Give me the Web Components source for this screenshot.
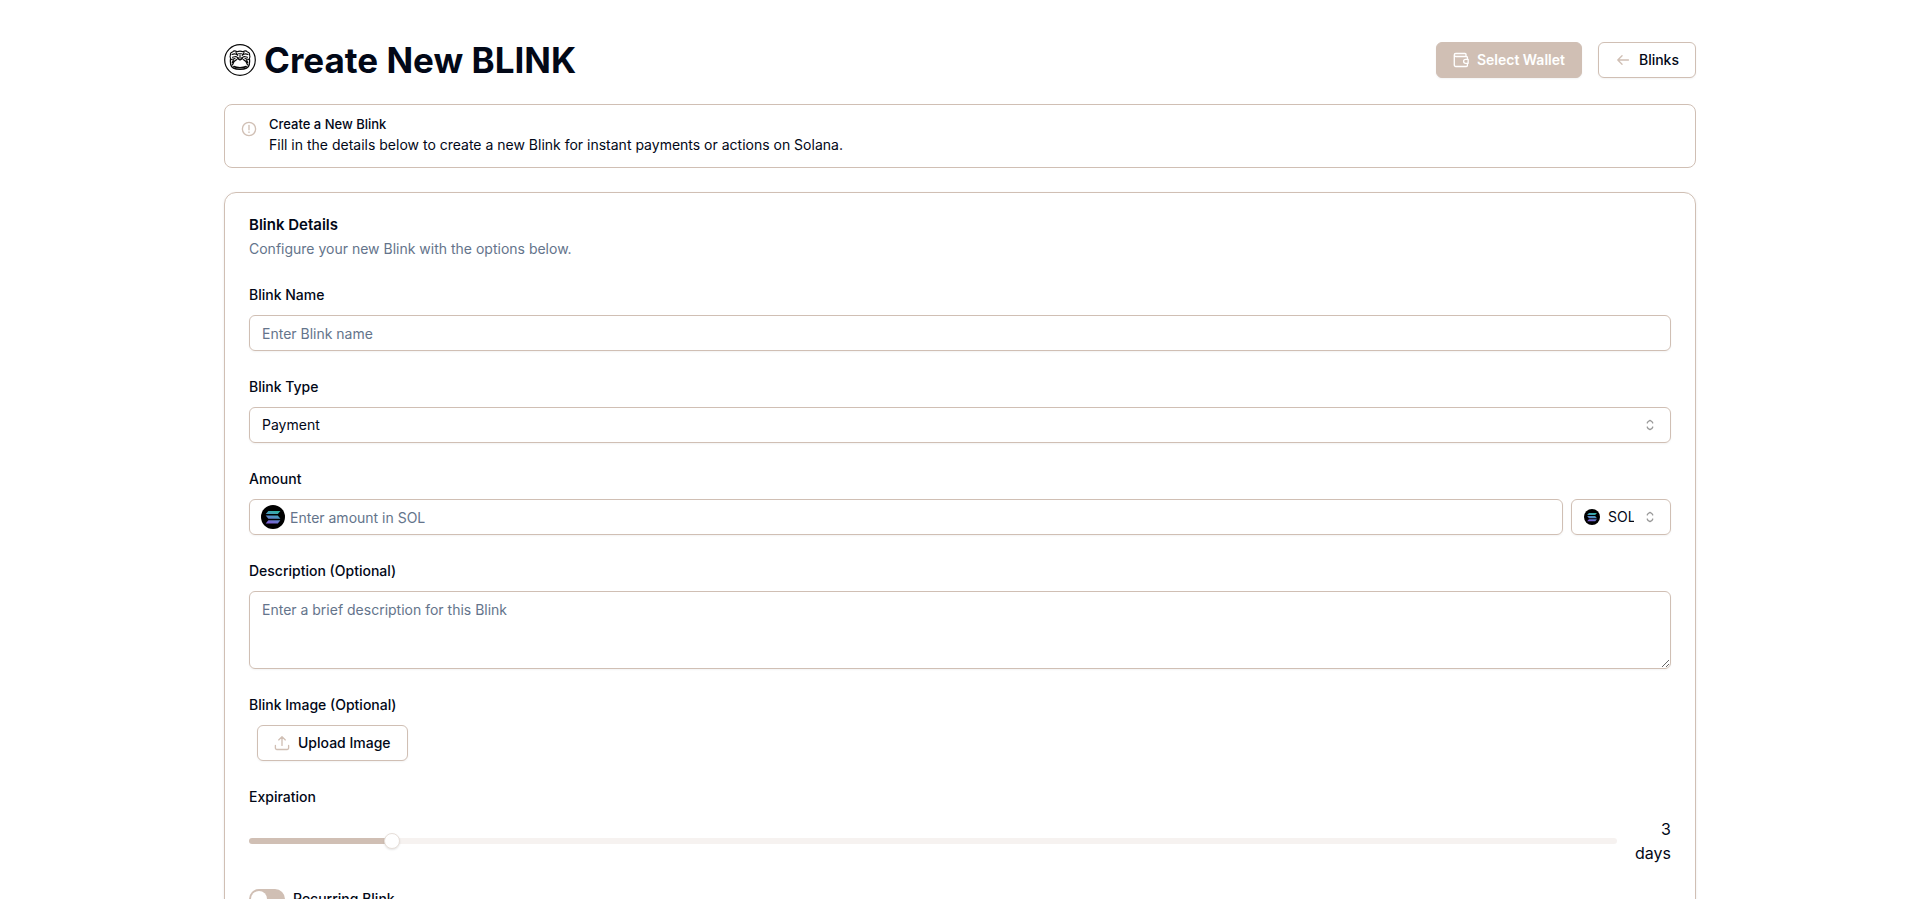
<!DOCTYPE html>
<html lang="en">
<head>
<meta charset="utf-8">
<meta name="viewport" content="width=device-width, initial-scale=1">
<title>Create New BLINK</title>
<style>
  html { scrollbar-width: none; }
  body {
    margin: 0;
    background: #fff;
    color: #020817;
    font: 400 14px/20px Inter, "Noto Sans", sans-serif;
    --line: #d0bfb4;
    --muted: #64748b;
    --track: #f6f2f0;
  }
</style>
</head>
<body>
<blink-page></blink-page>

<script>
const reset = `
  *, *::before, *::after { box-sizing: border-box; }
  :host { display: block; box-sizing: border-box; }
  svg { display: block; flex: none; }
  button, input, textarea, select { font: inherit; color: inherit; margin: 0; }
`;
const control = `
  .control {
    display: block; width: 100%; height: 36px; padding: 4px 12px;
    border: 1px solid var(--line); border-radius: 6px; background: transparent;
    box-shadow: 0 1px 2px rgb(0 0 0 / .05); outline: none;
  }
  .control::placeholder { color: var(--muted); opacity: 1; }
`;
const label = `label { display: block; font-weight: 500; line-height: 24px; margin-bottom: 8px; }`;

function define(name, css, html, ready) {
  const template = document.createElement('template');
  template.innerHTML = `<style>${reset}${css}</style>${html}`;
  customElements.define(name, class extends HTMLElement {
    constructor() {
      super();
      this.attachShadow({ mode: 'open' }).append(template.content.cloneNode(true));
    }
    connectedCallback() { if (ready) ready(this, this.shadowRoot); }
  });
}

/* Icons on a 15-unit grid */
const icons = {
  wallet: '<path d="M12.200 4.200V2.400a1 1 0 0 0-1-1H2.600a1.400 1.400 0 0 0 0 2.800h9.900a1 1 0 0 1 1 1v1.600M1.200 2.800v9.400a1.400 1.400 0 0 0 1.400 1.400h9.900a1 1 0 0 0 1-1v-2"/><path d="M14.200 6.900h-2.400a1.850 1.850 0 0 0 0 3.700h2.400z"/>',
  back: '<path d="M12.600 7.500H2.600M6.600 3.500l-4 4 4 4"/>',
  alert: '<circle cx="7.500" cy="7.500" r="6.200"/><path d="M7.500 4.200v4"/><path d="M7.500 10.300v.4"/>',
  upload: '<path d="M7.500 9.800V1.600M4.400 4.600l3.100-3.100 3.100 3.100M1.300 9.800v2.400a1.400 1.400 0 0 0 1.400 1.400h9.600a1.400 1.400 0 0 0 1.400-1.400V9.800"/>',
  sort: '<path d="M4.900 5.600c.3-1.300 1.500-1.900 2.600-2.400 1.100.5 2.300 1.100 2.600 2.400M4.900 9.400c.3 1.300 1.500 1.900 2.600 2.400 1.100-.5 2.300-1.100 2.600-2.400"/>'
};
define('blink-icon', `
  :host { flex: none; width: 16px; height: 16px; }
  svg { width: 100%; height: 100%; fill: none; stroke: currentColor; stroke-width: 1.250; stroke-linecap: round; stroke-linejoin: round; }
`, '<svg viewBox="0 0 15 15" aria-hidden="true"></svg>', (host, root) => {
  root.querySelector('svg').innerHTML = icons[host.getAttribute('name')];
});

define('solana-mark', `
  :host { flex: none; width: 24px; height: 24px; }
  :host([small]) { width: 16px; height: 16px; }
  svg { width: 100%; height: 100%; }
`, `<svg viewBox="0 0 24 24" aria-hidden="true">
  <defs><linearGradient id="g" gradientUnits="userSpaceOnUse" x1="14" y1="5.500" x2="10" y2="18.500">
    <stop offset="0" stop-color="#2eb3a2"/><stop offset=".5" stop-color="#5290c4"/><stop offset="1" stop-color="#7f5fd6"/></linearGradient></defs>
  <circle cx="12" cy="12" r="12" fill="#000"/>
  <g fill="url(#g)"><path d="M7.400 5.900h12l-2.600 3.200H4.700z"/><path d="M4.700 10.500h12.100l2.600 3.200h-12z"/><path d="M7.400 15.200h12l-2.600 3.200H4.700z"/></g>
</svg>`);

define('blink-logo', `
  :host { flex: none; width: 32px; height: 32px; }
`, `<svg width="32" height="32" viewBox="0 0 32 32" fill="none" stroke="#0a0a0a" stroke-linecap="round" stroke-linejoin="round" aria-hidden="true">
  <circle cx="16" cy="16" r="15.300" stroke-width="1.200"/>
  <path stroke-width="1.100" d="M8.500 8c1.300-1.600 3.300-1.100 4.500-.2 1.900-.8 4.100-.8 6 0 1.200-.9 3.200-1.400 4.500.2 1.600.4 2.300 1.500 2.100 3 .5 1.200.4 2.300-.1 3.200M8.500 8C6.900 8.400 6.200 9.500 6.400 11c-.5 1.200-.4 2.300.1 3.200"/>
  <path stroke-width="1.300" d="M6.600 14.500c-.5 2.300-.2 4.100.1 6 .6 3 4.300 4.900 9.300 4.900s8.700-1.900 9.300-4.900c.3-1.900.6-3.700.1-6"/>
  <path stroke-width="1.100" d="M8 10.500c2-1 4.200-.7 5.800.8M24 10.500c-2-1-4.200-.7-5.800.8M8.500 13.300l3.300-.8 2.700 1.500M23.500 13.300l-3.300-.8-2.700 1.500M12 8.500l1.500 2M20 8.500l-1.500 2M14.500 9.800h3M16 11v3M7.500 15.500l3.500-1M24.500 15.500l-3.500-1"/>
  <path stroke-width="1.500" d="M13.800 14.500l2.200 1.300 2.200-1.300"/>
  <path stroke-width="1.200" d="M12.800 15.500c-2 1-3.800 3.200-4.300 5.300M19.200 15.500c2 1 3.800 3.200 4.300 5.300M9.500 15.800l-1.200 2.700M22.500 15.800l1.200 2.700"/>
  <path stroke-width="1.500" d="M9.800 22.500c3.300 1.500 9.100 1.500 12.400 0"/>
</svg>`);

define('icon-button', `
  button {
    display: flex; align-items: center; gap: 8px; height: 36px; padding: 0 16px;
    border: 1px solid var(--line); border-radius: 6px; background: #fff;
    box-shadow: 0 1px 2px rgb(0 0 0 / .05); font-weight: 500; white-space: nowrap;
  }
  ::slotted(blink-icon) { color: var(--line); }
  :host([primary]) button { background: var(--line); color: #fff; font-weight: 600; }
  :host([primary]) ::slotted(blink-icon) { color: #fff; }
`, '<button type="button"><slot name="icon"></slot><slot></slot></button>');

define('page-header', `
  :host { display: flex; align-items: center; justify-content: space-between; gap: 16px; }
  .title, .actions { display: flex; align-items: center; }
  .title { gap: 8px; }
  .actions { gap: 16px; }
  h1 { margin: 0; font-size: 35px; line-height: 40px; font-weight: 700; }
`, `<div class="title"><blink-logo></blink-logo><h1><slot></slot></h1></div>
<div class="actions"><slot name="actions"></slot></div>`);

define('info-alert', `
  :host { display: flex; gap: 12px; padding: 11px 16px 12px; border: 1px solid var(--line); border-radius: 8px; }
  blink-icon { color: var(--line); margin-top: 5px; }
  h2 { margin: 0 0 3px; font-size: 13px; line-height: 16px; font-weight: 500; }
  p { margin: 0; }
`, `<blink-icon name="alert"></blink-icon><div><h2><slot name="title"></slot></h2><p><slot></slot></p></div>`);

define('detail-card', `
  :host { padding: 24px; border: 1px solid var(--line); border-radius: 12px; box-shadow: 0 1px 3px rgb(0 0 0 / .08); }
  h2 { margin: 0; font-size: 15px; line-height: 16px; font-weight: 600; }
  header { padding-bottom: 24px; }
  p { margin: 6px 0 0; color: var(--muted); }
  .body { display: grid; gap: 24px; }
`, `<header><h2><slot name="title"></slot></h2><p><slot name="note"></slot></p></header><div class="body"><slot></slot></div>`);

define('text-field', control + label, '<label for="f"></label><input class="control" id="f" type="text">', (h, r) => {
  r.querySelector('label').textContent = h.getAttribute('label');
  r.querySelector('input').placeholder = h.getAttribute('placeholder');
});

define('area-field', control + label + `
  textarea.control { height: 78px; padding: 8px 12px; resize: vertical; }
`, '<label for="f"></label><textarea class="control" id="f"></textarea>', (h, r) => {
  r.querySelector('label').textContent = h.getAttribute('label');
  r.querySelector('textarea').placeholder = h.getAttribute('placeholder');
});

const picker = `
  .picker { display: grid; align-items: center; }
  .picker > * { grid-area: 1 / 1; }
  .picker select { appearance: none; padding-right: 36px; }
  .picker blink-icon { justify-self: end; margin-right: 13px; color: #999; pointer-events: none; }
`;
define('type-field', control + label + picker, `
<label for="f">Blink Type</label>
<div class="picker"><select class="control" id="f"><option>Payment</option></select><blink-icon name="sort"></blink-icon></div>`);

define('amount-field', control + label + picker + `
  .row { display: grid; grid-template-columns: 1fr 100px; gap: 8px; }
  .amount { display: grid; align-items: center; }
  .amount > * { grid-area: 1 / 1; }
  .amount solana-mark { margin-left: 12px; }
  .amount input { padding-left: 40px; }
  .picker solana-mark { margin-left: 13px; pointer-events: none; }
  .picker select { padding-left: 36px; }
`, `<label for="f">Amount</label>
<div class="row">
  <div class="amount"><input class="control" id="f" type="text" inputmode="decimal" placeholder="Enter amount in SOL"><solana-mark></solana-mark></div>
  <div class="picker"><select class="control" aria-label="Token"><option>SOL</option></select><solana-mark small></solana-mark><blink-icon name="sort"></blink-icon></div>
</div>`);

define('image-field', label + `
  icon-button { width: fit-content; margin-left: 8px; }
`, `<label for="f">Blink Image (Optional)</label>
<input id="f" type="file" accept="image/*" hidden>
<icon-button><blink-icon slot="icon" name="upload"></blink-icon>Upload Image</icon-button>`, (h, r) => {
  r.querySelector('icon-button').onclick = () => r.querySelector('input').click();
});

define('expiry-field', label + `
  .row { display: flex; align-items: center; gap: 16px; }
  input { appearance: none; flex: 1; min-width: 0; height: 16px; background: transparent; }
  input::-webkit-slider-runnable-track {
    height: 6px; border-radius: 3px;
    background: linear-gradient(90deg, var(--line) 10%, var(--track) 10%);
  }
  input::-webkit-slider-thumb {
    appearance: none; width: 16px; height: 16px; margin-top: -5px; border-radius: 50%;
    background: #fff; border: 1px solid #e7dfd9; box-shadow: 0 1px 2px rgb(0 0 0 / .1);
  }
  output { width: 38px; font-size: 16px; line-height: 24px; text-align: right; }
`, `<label for="f">Expiration</label>
<div class="row"><input id="f" type="range" min="0" max="1000" value="100"><output for="f">3 days</output></div>`);

define('switch-field', `
  :host { display: flex; align-items: center; gap: 8px; }
  label { font-weight: 500; }
  input {
    appearance: none; display: flex; align-items: center; width: 36px; height: 20px; padding: 2px;
    border-radius: 10px; background: var(--line);
  }
  input::before { content: ""; width: 16px; height: 16px; border-radius: 50%; background: #fff; }
  input:checked { justify-content: flex-end; }
`, '<input id="f" type="checkbox" role="switch"><label for="f"><slot></slot></label>');

define('blink-page', `
  main { display: grid; gap: 24px; max-width: 1536px; margin: 0 auto; padding: 40px 32px; }
`, `<main>
  <page-header>Create New BLINK
    <icon-button slot="actions" primary><blink-icon slot="icon" name="wallet"></blink-icon>Select Wallet</icon-button>
    <icon-button slot="actions"><blink-icon slot="icon" name="back"></blink-icon>Blinks</icon-button>
  </page-header>
  <info-alert><span slot="title">Create a New Blink</span>Fill in the details below to create a new Blink for instant payments or actions on Solana.</info-alert>
  <detail-card>
    <span slot="title">Blink Details</span><span slot="note">Configure your new Blink with the options below.</span>
    <text-field label="Blink Name" placeholder="Enter Blink name"></text-field>
    <type-field></type-field>
    <amount-field></amount-field>
    <area-field label="Description (Optional)" placeholder="Enter a brief description for this Blink"></area-field>
    <image-field></image-field>
    <expiry-field></expiry-field>
    <switch-field>Recurring Blink</switch-field>
  </detail-card>
</main>`);
</script>
</body>
</html>
